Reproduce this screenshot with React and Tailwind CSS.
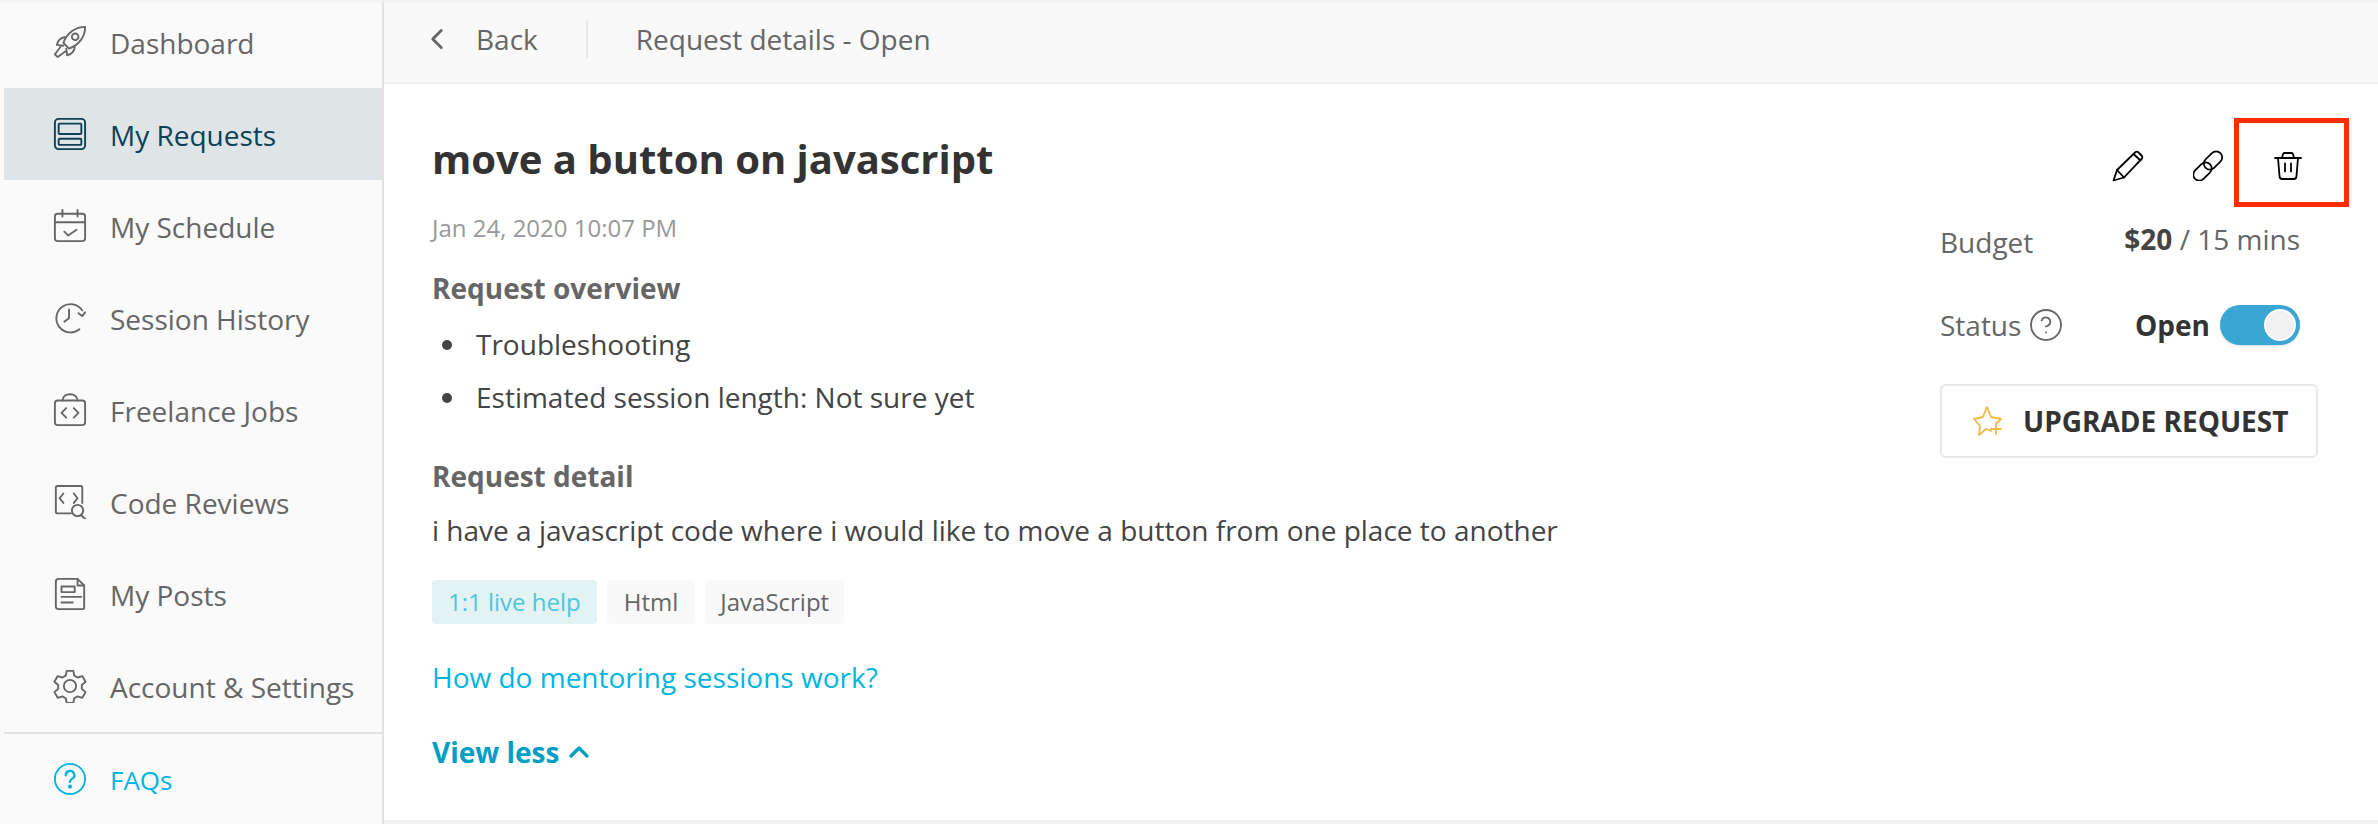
import { HelpCircle, ChevronLeft, ChevronUp } from "lucide-react";

const stroke = { width: 34, height: 34, fill: "none", stroke: "currentColor", strokeWidth: 2, strokeLinecap: "round", strokeLinejoin: "round" };

function Rocket() {
  return (
    <svg viewBox="0 0 36 36" {...stroke}>
      <path d="M34 2C24 2 15 8 11 19l6 6C28 21 34 12 34 2z" />
      <circle cx="23.500" cy="12.500" r="3.500" />
      <path d="M13 13c-4 0-8 3-9 8l7 1M23 23c0 4-3 8-8 9l-1-7" />
      <path d="M8 23l-6 8 3 3 8-6" />
    </svg>
  );
}

function Requests() {
  return (
    <svg viewBox="0 0 36 36" {...stroke}>
      <rect x="2" y="2" width="32" height="32" rx="4" />
      <rect x="6" y="7" width="24" height="11" rx="1" />
      <rect x="6" y="23" width="24" height="6.500" rx="1" />
    </svg>
  );
}

function Schedule() {
  return (
    <svg viewBox="0 0 36 36" {...stroke}>
      <rect x="2" y="5" width="32" height="29" rx="3" />
      <path d="M2 14h32M10 1v7M26 1v7M12 24l4 4 9-6" />
    </svg>
  );
}

function History() {
  return (
    <svg viewBox="0 0 36 36" {...stroke}>
      <path d="M28 30a15 15 0 1 1 3-20" />
      <path d="M34 12l-3 4-4-3" />
      <path d="M17 9v9l-5 4" />
    </svg>
  );
}

function Jobs() {
  return (
    <svg viewBox="0 0 36 36" {...stroke}>
      <rect x="2" y="8" width="32" height="26" rx="3" />
      <path d="M10 8c0-9 16-9 16 0M14 16l-5 5 5 5M22 16l5 5-5 5" />
    </svg>
  );
}

function CodeReview() {
  return (
    <svg viewBox="0 0 36 36" {...stroke}>
      <path d="M19 30H5a2 2 0 0 1-2-2V3a2 2 0 0 1 2-2h24a2 2 0 0 1 2 2v16" />
      <path d="M11 9l-4 5 4 5M22 9l4 5-4 5" />
      <circle cx="26" cy="27" r="6" />
      <path d="M30 32l4 4" />
    </svg>
  );
}

function Posts() {
  return (
    <svg viewBox="0 0 36 36" {...stroke}>
      <path d="M26 2H6a3 3 0 0 0-3 3v26a3 3 0 0 0 3 3h25a2 2 0 0 0 2-2V9z" />
      <path d="M26 2v7h7M9 10h14v6H9zM9 21h21M9 27h12" />
    </svg>
  );
}

function Gear() {
  return (
    <svg viewBox="0 0 36 36" {...stroke}>
      <circle cx="18" cy="18" r="6.500" />
      <path d="M14.500 2h7l1 5 3.500 2 5-1.500 3.500 6-4 3.500v4l4 3.500-3.500 6-5-1.500-3.500 2-1 5h-7l-1-5-3.500-2-5 1.500-3.500-6 4-3.500v-4l-4-3.500 3.500-6 5 1.500 3.500-2z" />
    </svg>
  );
}

function Faq() {
  return (
    <svg viewBox="0 0 36 36" {...stroke}>
      <circle cx="18" cy="18" r="16" />
      <path d="M13.500 14a4.500 4.500 0 1 1 6.500 4c-1.300.8-2 1.500-2 3" strokeWidth="2.500" />
      <circle cx="18" cy="26" r="1.200" fill="currentColor" />
    </svg>
  );
}

function StarPlus() {
  return (
    <svg width="30" height="30" viewBox="0 0 30 30" fill="none" stroke="#f0b94a" strokeWidth="1.800" strokeLinecap="round" strokeLinejoin="round">
      <path d="M18 25l-5-2-7 6 1-9-6-7 9-2 4-10 4 10 10 2-5 5" />
      <path d="M23 18v10M18 23h10" />
    </svg>
  );
}

function EditIcon() {
  return (
    <svg width="32" height="32" viewBox="0 0 32 32" fill="none" stroke="black" strokeWidth="1.800" strokeLinecap="round" strokeLinejoin="round">
      <path d="M1.500 30.500 5 20 23 2.500a2.500 2.500 0 0 1 3.500 0l3 3a2.500 2.500 0 0 1 0 3.500L12 27.500z" />
      <path d="M5 20l7 7.500M21.500 4l7 6.500" />
    </svg>
  );
}

function LinkIcon() {
  return (
    <svg width="30" height="31" viewBox="0 0 30 31" fill="none" stroke="black" strokeWidth="1.700">
      <rect x="-1" y="15.500" width="21" height="12" rx="6" transform="rotate(-45 9.500 21.500)" />
      <rect x="9.500" y="4.500" width="21" height="12" rx="6" transform="rotate(-45 20 10.500)" />
    </svg>
  );
}

function TrashIcon() {
  return (
    <svg width="28" height="28" viewBox="0 0 28 28" fill="none" stroke="black" strokeWidth="1.800" strokeLinecap="round" strokeLinejoin="round">
      <path d="M1 6h26M4 6l1.500 18a3 3 0 0 0 3 3h11a3 3 0 0 0 3-3L24 6" />
      <path d="M8 6l1-4a1.500 1.500 0 0 1 1.500-1h7A1.500 1.500 0 0 1 19 2l1 4M11 11.500v8M17 11.500v8" />
    </svg>
  );
}

const navItems = [
  { label: "Dashboard", icon: Rocket },
  { label: "My Requests", icon: Requests, active: true },
  { label: "My Schedule", icon: Schedule },
  { label: "Session History", icon: History },
  { label: "Freelance Jobs", icon: Jobs },
  { label: "Code Reviews", icon: CodeReview },
  { label: "My Posts", icon: Posts },
  { label: "Account & Settings", icon: Gear },
];

function App() {
  return (
    <div className="relative flex h-[824px] w-[2378px] overflow-hidden bg-white font-['Open_Sans',sans-serif] text-[28px] text-[#333]">
      <aside className="flex w-[384px] shrink-0 flex-col border-r-2 border-[#e2e2e2] bg-[#fafafa]">
        <div className="-mt-1">
          {navItems.map((item) => (
            <div
              key={item.label}
              className={
                item.active
                  ? "ml-1 flex h-[92px] items-center gap-[23px] bg-[#dfe4e6] pl-[49px] text-[#0b4258]"
                  : "ml-1 flex h-[92px] items-center gap-[23px] pl-[49px] text-[#666]"
              }
            >
              <item.icon />
              <span className="pt-[2px]">{item.label}</span>
            </div>
          ))}
        </div>
        <div className="ml-1 flex h-[92px] items-center gap-[23px] border-t-2 border-[#e2e2e2] pl-[49px] text-[#00b5e2]">
          <Faq />
          <span className="pt-[2px] text-[26px]">FAQs</span>
        </div>
      </aside>

      <main className="flex min-w-0 flex-1 flex-col border-b-4 border-[#f0f0f0]">
        <header className="flex h-[84px] shrink-0 items-center border-b-2 border-[#eeeeee] bg-[#f9f9f9] pb-[4px] text-[#666]">
          <ChevronLeft className="ml-[36px]" size={34} strokeWidth={2} />
          <span className="ml-[22px]">Back</span>
          <div className="ml-[48px] h-[38px] w-0.5 bg-[#e8e8e8]" />
          <span className="ml-[48px]">Request details - Open</span>
        </header>

        <div className="flex flex-1">
          <section className="flex-1 pl-[48px] pt-[49px]">
            <h1 className="text-[40px] font-bold leading-[52px] text-[#333]">move a button on javascript</h1>
            <p className="mt-[27px] text-[24px] leading-[32px] text-[#999]">Jan 24, 2020 10:07 PM</p>
            <h2 className="mt-[24px] font-bold leading-[40px] text-[#666]">Request overview</h2>
            <ul className="mt-[10px] pl-[10px] leading-[53px] text-[#444]">
              <li className="flex items-center gap-[24px]">
                <span className="h-[10px] w-[10px] rounded-full bg-[#444]" />
                Troubleshooting
              </li>
              <li className="flex items-center gap-[24px]">
                <span className="h-[10px] w-[10px] rounded-full bg-[#444]" />
                Estimated session length: Not sure yet
              </li>
            </ul>
            <h2 className="mt-[32px] font-bold leading-[40px] text-[#666]">Request detail</h2>
            <p className="mt-[14px] leading-[40px] text-[#444]">
              i have a javascript code where i would like to move a button from one place to another
            </p>
            <div className="mt-[30px] flex gap-[10px] text-[24px] leading-[44px] text-[#666]">
              <span className="rounded bg-[#e3f2f3] px-[16px] text-[#4fc6dd]">1:1 live help</span>
              <span className="rounded bg-[#f9f9f9] px-[17px]">Html</span>
              <span className="rounded bg-[#f9f9f9] px-[15px]">JavaScript</span>
            </div>
            <a className="mt-[31px] block leading-[44px] text-[#00b5e2]">How do mentoring sessions work?</a>
            <button className="mt-[33px] flex items-center gap-1 font-bold leading-[40px] text-[#00a0c6]">
              View less <ChevronUp size={32} strokeWidth={2.500} />
            </button>
          </section>

          <section className="w-[438px] shrink-0 pr-[60px] pt-[66px]">
            <div className="mr-[16px] flex items-start justify-end">
              <EditIcon />
              <div className="ml-[49px]">
                <LinkIcon />
              </div>
              <div className="ml-[51px] mt-[2px]">
                <TrashIcon />
              </div>
            </div>
            <div className="mt-[36px] flex items-start justify-between pr-[18px] text-[#666]">
              <span className="mt-[3px]">Budget</span>
              <span>
                <b className="text-[#444]">$20</b> / 15 mins
              </span>
            </div>
            <div className="mt-[42px] flex h-10 items-center justify-between pr-[18px] text-[#666]">
              <span className="flex items-center gap-[7px]">
                Status <HelpCircle size={36} strokeWidth={1.200} />
              </span>
              <span className="flex items-center gap-[10px]">
                <b className="text-[#333]">Open</b>
                <span className="flex h-10 w-20 items-center justify-end rounded-full bg-[#3aa6d3] p-1 shadow">
                  <span className="h-8 w-8 rounded-full border-2 border-white bg-[#f2f2f2]" />
                </span>
              </span>
            </div>
            <button className="mt-[39px] flex h-[74px] w-[378px] items-center rounded-md border-2 border-[#e8e8e8] bg-white pl-[31px] font-bold text-[#333]">
              <StarPlus />
              <span className="ml-[20px]">UPGRADE REQUEST</span>
            </button>
          </section>
        </div>
      </main>

      {/* annotation and the soft shadow along the top edge */}
      <div className="absolute left-0 top-0 h-1 w-full bg-gradient-to-b from-[#f1f1f1] to-transparent" />
      <div className="absolute left-[2234px] top-[118px] h-[89px] w-[115px] border-[5px] border-[#ff2d00]" />
    </div>
  );
}

export default App;
